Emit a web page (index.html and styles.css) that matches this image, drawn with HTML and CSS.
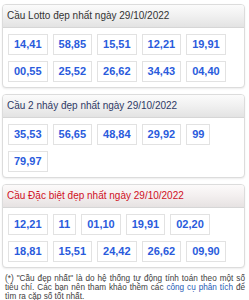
FILE: index.html
```html
<!DOCTYPE html>
<html lang="vi">
<head>
<meta charset="utf-8">
<title>Cầu Lotto</title>
<link rel="stylesheet" href="styles.css">
</head>
<body>
<div class="page">
  <section class="panel">
    <div class="panel-head">Cầu Lotto đẹp nhất ngày 29/10/2022</div>
    <div class="panel-body">
      <span class="num">14,41</span><span class="num">58,85</span><span class="num">15,51</span><span class="num">12,21</span><span class="num">19,91</span>
      <span class="num">00,55</span><span class="num">25,52</span><span class="num">26,62</span><span class="num">34,43</span><span class="num">04,40</span>
    </div>
  </section>
  <section class="panel">
    <div class="panel-head head-blue">Cầu 2 nháy đẹp nhất ngày 29/10/2022</div>
    <div class="panel-body">
      <span class="num">35,53</span><span class="num">56,65</span><span class="num">48,84</span><span class="num">29,92</span><span class="num">99</span>
      <span class="num">79,97</span>
    </div>
  </section>
  <section class="panel">
    <div class="panel-head head-red">Cầu Đặc biệt đẹp nhất ngày 29/10/2022</div>
    <div class="panel-body">
      <span class="num">12,21</span><span class="num">11</span><span class="num">01,10</span><span class="num">19,91</span><span class="num">02,20</span>
      <span class="num">18,81</span><span class="num">15,51</span><span class="num">24,42</span><span class="num">26,62</span><span class="num">09,90</span>
    </div>
  </section>
  <p class="note">(*) "Cầu đẹp nhất" là do hệ thống tự động tính toán theo một số tiêu chí. Các bạn nên tham khảo thêm các <a class="note-link" href="#">công cụ phân tích</a> để tìm ra cặp số tốt nhất.</p>
</div>
</body>
</html>
```

FILE: styles.css
```css
html, body {
  margin: 0;
  padding: 0;
  background: #ffffff;
}
body {
  font-family: "Liberation Sans", Arial, sans-serif;
  color: #333333;
}
.page {
  padding: 4px 4px 0 2px;
}
.panel {
  border: 1px solid #dcdcdc;
  border-radius: 4px;
  margin-bottom: 6px;
  background: #ffffff;
  box-shadow: 0 1px 2px rgba(0, 0, 0, 0.08);
  overflow: hidden;
}
.panel-head {
  height: 22px;
  line-height: 22px;
  padding-left: 4px;
  font-size: 10px;
  color: #333333;
  background: linear-gradient(to bottom, #fbfbfb 0%, #f0f0f0 50%, #e3e3e3 100%);
  border-bottom: 1px solid #d6d6d6;
  white-space: nowrap;
}
.head-blue {
  color: #2f3a66;
}
.head-red {
  color: #d0101e;
  background: linear-gradient(to bottom, #fcfafa 0%, #f3efef 50%, #e6e2e2 100%);
}
.panel-body {
  display: flex;
  flex-wrap: wrap;
  gap: 6px 5px;
  padding: 6px 4px 5px 5px;
}
.num {
  display: block;
  height: 19px;
  line-height: 19px;
  padding: 0 5px;
  border: 1px solid #e2e2e2;
  font-size: 11px;
  font-weight: bold;
  color: #2a5bdc;
}
.note {
  margin: 3px 0 0 3px;
  font-size: 8.2px;
  line-height: 9px;
  color: #404040;
  text-align: justify;
}
.note-link {
  color: #1f5bb4;
  text-decoration: none;
}
```
